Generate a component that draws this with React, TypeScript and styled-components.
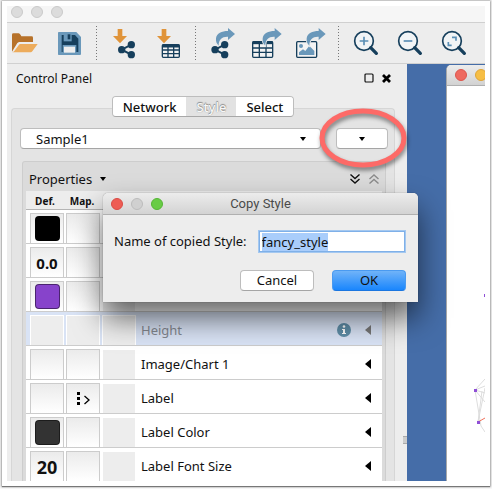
import React, { useEffect, useRef } from "react";
import styled, { createGlobalStyle } from "styled-components";

const sans = '"Noto Sans", "Open Sans", sans-serif';
const navy = "#163f5c";
const steel = "#6a98ba";
const orange = "#e0943a";

const GlobalStyle = createGlobalStyle`
  * { box-sizing: border-box; }
  body { margin: 0; background: #fff; font-family: ${sans}; font-size: 13px; color: #111; }
  button, input { font-family: inherit; margin: 0; }
`;

const Stage = styled.div`
  height: 100vh;
  padding: 1px 2px 3px;
  background: #fafafa;
`;

const Frame = styled.div`
  height: 100%;
  padding: 5px;
  background: #fff;
  box-shadow: 0 0 2px 1px rgba(0, 0, 0, 0.3), 0 1px 1px rgba(0, 0, 0, 0.4);
`;

const AppWindow = styled.main`
  position: relative;
  height: 100%;
  display: flex;
  flex-direction: column;
  overflow: hidden;
  background: #ededed;
`;

const TitleBar = styled.div`
  flex: none;
  height: 17px;
  padding-left: 4px;
  display: flex;
  align-items: flex-start;
  gap: 8px;
  background: #f6f6f6;
  border-bottom: 1px solid #d0d0d0;
`;

const Light = styled.span<{ $color: string; $edge: string }>`
  flex: none;
  width: 12px;
  height: 12px;
  border-radius: 50%;
  background: ${(p) => p.$color};
  border: 1px solid ${(p) => p.$edge};
`;

const Toolbar = styled.div`
  flex: none;
  height: 41px;
  display: flex;
  align-items: center;
  gap: 8px;
  border-bottom: 1px solid #d0d0d0;
`;

const ToolButton = styled.button`
  flex: none;
  width: 36px;
  height: 36px;
  padding: 0;
  border: 0;
  background: none;
  svg { display: block; width: 36px; height: 36px; }
`;

const Separator = styled.span`
  flex: none;
  width: 3px;
  height: 34px;
  background: repeating-linear-gradient(#777 0 1px, transparent 1px 3px) center / 1px 100% no-repeat;
`;

const Workspace = styled.div`
  flex: 1;
  min-height: 0;
  display: grid;
  grid-template-columns: minmax(0, 1fr) 78px;
`;

const ControlPanel = styled.section`
  position: relative;
  display: flex;
  flex-direction: column;
  min-height: 0;
  padding: 0 12px 0 4px;
`;

const PanelHeader = styled.header`
  flex: none;
  height: 32px;
  padding: 0 4px 4px 5px;
  display: flex;
  align-items: center;
  gap: 8px;
`;

const PanelTitle = styled.h1`
  flex: 1;
  margin: 0;
  font-size: 12px;
  font-weight: 400;
`;

const PlainButton = styled.button`
  display: flex;
  align-items: center;
  padding: 0;
  border: 0;
  background: none;
  color: inherit;
  svg { display: block; }
`;

const Grip = styled.span`
  position: absolute;
  right: 0;
  bottom: 37px;
  width: 4px;
  height: 8px;
  background: #ccc;
  border: solid #aaa;
  border-width: 1px 0;
`;

const TabStrip = styled.div`
  flex: none;
  align-self: center;
  z-index: 1;
  display: flex;
  height: 21px;
  border: 1px solid #bdbdbd;
  border-bottom-color: #a8a8a8;
  border-radius: 4px;
  overflow: hidden;
  margin-bottom: -9px;
`;

const Tab = styled.button<{ $active?: boolean }>`
  padding: 0 10px;
  border: 0;
  font-size: 13px;
  line-height: 18px;
  font-weight: 500;
  background: ${(p) => (p.$active ? "#e2e2e2" : "#fff")};
  color: ${(p) => (p.$active ? "#f8f8f8" : "#111")};
  text-shadow: ${(p) => (p.$active ? "0 -1px 1px #888, 0 0 1px #888" : "none")};
`;

const TabBody = styled.div`
  flex: 1;
  min-height: 0;
  display: flex;
  flex-direction: column;
  padding: 19px 6px 0 8px;
  background: #e4e4e4;
  border: 1px solid #d6d6d6;
  border-bottom: 0;
  border-radius: 4px 4px 0 0;
`;

const StyleRow = styled.div`
  flex: none;
  display: flex;
  gap: 15px;
  margin-bottom: 12px;
`;

const boxed = `
  height: 21px;
  border: 1px solid #bdbdbd;
  border-bottom-color: #a5a5a5;
  border-radius: 4px;
  background: #fff;
`;

const SelectWrap = styled.div`
  flex: 1;
  display: flex;
  align-items: center;
  padding-right: 14px;
  ${boxed}
`;

const StyleSelect = styled.select`
  flex: 1;
  appearance: none;
  border: 0;
  padding: 0 0 0 15px;
  background: none;
  color: #111;
  font: 13px ${sans};
  outline: none;
`;

const MenuWrap = styled.div`
  position: relative;
  flex: none;
  width: 52px;
`;

const MenuButton = styled.button`
  ${boxed}
  width: 100%;
  display: flex;
  align-items: center;
  justify-content: center;
  padding: 0;
`;

const Highlight = styled.svg`
  position: absolute;
  left: -20px;
  top: -23px;
  width: 96px;
  height: 70px;
  overflow: visible;
  pointer-events: none;
`;

const Properties = styled.section`
  flex: 1;
  min-height: 0;
  margin: 0 2px;
  padding: 0 3px;
  overflow: hidden;
  background: #dbdbdb;
  border: solid #cdcdcd;
  border-width: 1px 1px 0;
  border-radius: 3px 3px 0 0;
`;

const PropertiesHeader = styled.div`
  height: 29px;
  padding: 4px 3px 0;
  display: flex;
  align-items: center;
  gap: 9px;
`;

const MenuLabel = styled.button`
  flex: 1;
  display: flex;
  align-items: center;
  gap: 8px;
  padding: 0;
  border: 0;
  background: none;
  color: #111;
  font-size: 13px;
`;

const PropTable = styled.table`
  width: 100%;
  table-layout: fixed;
  border-collapse: separate;
  border-spacing: 0;
  background: #fff;
`;

const HeadCell = styled.th<{ $width?: number }>`
  width: ${(p) => (p.$width ? `${p.$width}px` : "auto")};
  height: 19px;
  padding: 2px 0 0;
  background: #ededed;
  border-bottom: 1px solid #b5b5b5;
  font-size: 10px;
  line-height: 14px;
  font-weight: 700;
  text-align: center;
`;

const Row = styled.tr<{ $selected?: boolean }>`
  background: ${(p) => (p.$selected ? "#d9e3f5" : "#fff")};
  color: ${(p) => (p.$selected ? "#83878f" : "#111")};
  --cell-edge: ${(p) => (p.$selected ? "#fff" : "#ccc")};
  --cell-fill: ${(p) => (p.$selected ? "#ededed" : "linear-gradient(#ebebeb, #fff)")};
`;

const Cell = styled.td`
  height: 34px;
  padding: 3px 0 0 2px;
  border-bottom: 1px solid #ccc;
  vertical-align: top;
  &:first-child { padding-left: 4px; }
`;

const Well = styled.div<{ $flat?: boolean; $size?: number }>`
  display: flex;
  align-items: center;
  justify-content: center;
  height: 30px;
  width: 34px;
  font-size: ${(p) => p.$size ?? 15}px;
  font-weight: 700;
  color: #111;
  background: ${(p) => (p.$flat ? "#ededed" : "var(--cell-fill)")};
  border: solid ${(p) => (p.$flat ? "#fff" : "var(--cell-edge)")};
  border-width: 1px 1px 0;
`;

const Swatch = styled.span<{ $color: string }>`
  width: 25px;
  height: 25px;
  border-radius: 4px;
  border: 1px solid rgba(0, 0, 0, 0.45);
  background: ${(p) => p.$color};
`;

const NameCell = styled.div`
  height: 30px;
  padding: 0 11px 0 3px;
  display: flex;
  align-items: center;
  gap: 14px;
  font-size: 13px;
  span { flex: 1; }
`;

const Desktop = styled.div`
  padding: 1px 0 0 39px;
  display: flex;
  background: #456da8;
`;

const NetworkWindow = styled.div`
  flex: 1;
  display: flex;
  flex-direction: column;
  border-left: 1px solid #a8a8a8;
  border-radius: 5px 0 0 0;
  background: #fff;
  overflow: hidden;
`;

const NetworkTitle = styled.div`
  flex: none;
  height: 21px;
  padding-left: 8px;
  display: flex;
  align-items: center;
  gap: 8px;
  background: linear-gradient(#ececec, #d2d2d2);
  border-bottom: 1px solid #b0b0b0;
`;

const NetworkCanvas = styled.svg`
  flex: none;
  align-self: flex-end;
  width: 38px;
  height: 395px;
`;

const Dialog = styled.form`
  position: absolute;
  left: 96px;
  top: 187px;
  width: 315px;
  background: #ededed;
  border-radius: 5px 5px 0 0;
  box-shadow: 0 0 1px rgba(0, 0, 0, 0.6), 0 16px 30px rgba(0, 0, 0, 0.6);
`;

const DialogTitle = styled.div`
  height: 22px;
  padding: 0 8px;
  display: grid;
  grid-template-columns: 52px 1fr 52px;
  align-items: center;
  border-radius: 5px 5px 0 0;
  background: linear-gradient(#ececec, #d3d3d3);
  border-bottom: 1px solid #b0b0b0;
`;

const Lights = styled.div`
  display: flex;
  gap: 8px;
`;

const DialogName = styled.h2`
  margin: 0;
  text-align: center;
  font: 400 13px/20px Roboto, Inter, sans-serif;
  color: #4a4a4a;
`;

const Field = styled.label`
  display: flex;
  align-items: center;
  gap: 12px;
  padding: 16px 13px 0 11px;
  font-size: 13px;
  line-height: 21px;
  white-space: nowrap;
`;

const NameInput = styled.input`
  flex: 1;
  min-width: 0;
  height: 21px;
  padding: 0 2px;
  border: 1px solid #7fb0e8;
  outline: 1px solid #a4c8f0;
  outline-offset: 0;
  background: #fff;
  color: #111;
  font-size: 13px;
  line-height: 17px;
  &::selection { background: #a9cdfb; color: #111; }
`;

const Actions = styled.div`
  display: flex;
  justify-content: flex-end;
  gap: 18px;
  padding: 18px 12px 11px;
`;

const ActionButton = styled.button<{ $primary?: boolean }>`
  width: 74px;
  height: 21px;
  padding: 0;
  border: 1px solid ${(p) => (p.$primary ? "#4a9af0" : "#bdbdbd")};
  border-bottom-color: ${(p) => (p.$primary ? "#1a76e0" : "#a5a5a5")};
  border-radius: 4px;
  background: ${(p) => (p.$primary ? "linear-gradient(#70b3f8, #1a86fd)" : "#fff")};
  color: #111;
  font-size: 13px;
  line-height: 17px;
`;

const DownArrow = () => (
  <svg width="6" height="4" viewBox="0 0 6 4" aria-hidden="true">
    <path d="M0 0H6L3 4Z" fill="#000" />
  </svg>
);

const LeftArrow = ({ color }: { color: string }) => (
  <svg width="6" height="10" viewBox="0 0 6 10" aria-hidden="true">
    <path d="M6 0V10L0 5Z" fill={color} />
  </svg>
);

const Chevrons = ({ up }: { up?: boolean }) => (
  <svg width="10" height="10" viewBox="0 0 10 10" fill="none" stroke={up ? "#8c8c8c" : "#111"} strokeWidth="1.4" aria-hidden="true">
    <path d={up ? "M.5 5 5 1 9.500 5M.5 9.500 5 5.500 9.500 9.500" : "M.5 .5 5 4.500 9.500 .5M.5 5 5 9 9.500 5"} />
  </svg>
);

const ShareGlyph = ({ x, y }: { x: number; y: number }) => (
  <g transform={`translate(${x} ${y})`} fill={navy}>
    <path d="M29-15 0 0 29 15" fill="none" stroke={navy} strokeWidth="6" />
    <circle r="11" />
    <circle cx="29" cy="-15" r="11" />
    <circle cx="29" cy="15" r="11" />
  </g>
);

const ImportArrow = () => <path d="M35 12H49V33H63L42 55 21 33H35Z" fill={orange} />;

const ExportArrow = ({ x }: { x: number }) => (
  <path
    transform={`translate(${x} 0)`}
    d="M41 62C35 56 32 50 33 40 35 24 50 18 69 18V9L90 27 69 45V35C52 34 41 42 41 62Z"
    fill={steel}
    stroke="#ededed"
    strokeWidth="5"
    paintOrder="stroke"
  />
);

const FloppyIcon = () => (
  <>
    <path d="M23 21H76L90 36V87Q90 90 87 90H23Q21 90 21 87V24Q21 21 23 21Z" fill={steel} />
    <path d="M32 30H72L82 41V81H32Z" fill={navy} />
    <path d="M38 26H62V49H38Z" fill={steel} />
    <path d="M50 28H58V43H50Z" fill={navy} />
    <path d="M35 60H76V84H35Z" fill={steel} />
    <path d="M39 65H72V83H39Z" fill="#eee" />
  </>
);

const Lens = ({ children }: { children: React.ReactNode }) => (
  <>
    <circle cx="48" cy="48" r="28" fill="#f1f4f6" stroke={navy} strokeWidth="5" />
    <path d="M68 68 85 85" stroke={navy} strokeWidth="10" strokeLinecap="round" />
    <g fill="none" stroke="#5b8fb5" strokeWidth="5">{children}</g>
  </>
);

const tools: Array<{ name: string; art: React.ReactNode } | null> = [
  {
    name: "Open session",
    art: (
      <>
        <path d="M15 80V29Q15 25 19 25H35Q38 25 41 30L43 34H74Q78 34 78 38V51H36L31 54Z" fill="#b7722a" />
        <path d="M16 82Q20 81 22 78L36 59Q37 57 40 57H92L76 79Q74 82 71 82Z" fill="#edac5c" />
      </>
    ),
  },
  { name: "Save session", art: <FloppyIcon /> },
  null,
  { name: "Import network", art: <><ImportArrow /><ShareGlyph x={47} y={74} /></> },
  {
    name: "Import table",
    art: (
      <>
        <ImportArrow />
        <rect x="37" y="59" width="51" height="38" rx="3" fill="#f3f3f3" stroke={navy} strokeWidth="4" />
        <path d="M37 63H88" stroke={navy} strokeWidth="9" />
        <path d="M37 75H88M37 86H88M54 60V97M71 60V97" stroke={navy} strokeWidth="4" />
      </>
    ),
  },
  null,
  { name: "Export network", art: <><ExportArrow x={0} /><ShareGlyph x={30} y={74} /></> },
  {
    name: "Export table",
    art: (
      <>
        <rect x="11" y="50" width="60" height="47" rx="3" fill="#f3f3f3" stroke={navy} strokeWidth="4" />
        <path d="M11 53H71" stroke={navy} strokeWidth="9" />
        <path d="M11 69H71M11 82H71M31 52V97M51 52V97" stroke={navy} strokeWidth="4" />
        <ExportArrow x={8} />
      </>
    ),
  },
  {
    name: "Export image",
    art: (
      <>
        <rect x="11" y="50" width="60" height="47" rx="3" fill="#f3f3f3" stroke={navy} strokeWidth="4" />
        <circle cx="24" cy="63" r="6" fill={steel} />
        <path d="M18 90V82L30 73 37 78 49 62 64 78V90Z" fill={steel} />
        <ExportArrow x={8} />
      </>
    ),
  },
  null,
  { name: "Zoom in", art: <Lens><path d="M35 48H61M48 35V61" /></Lens> },
  { name: "Zoom out", art: <Lens><path d="M35 48H61" /></Lens> },
  { name: "Fit content", art: <Lens><path d="M48 37H60V47M37 51V61H47" /></Lens> },
];

const MappingIcon = () => (
  <svg width="13" height="13" viewBox="0 0 13 13" aria-label="Mapping">
    <path d="M0 0h3v3H0zM0 5h3v3H0zM0 10h3v3H0z" fill="#000" />
    <path d="M7.500 4 12 8 7.500 12" fill="none" stroke="#000" strokeWidth="1.300" />
  </svg>
);

const InfoIcon = () => (
  <svg width="14" height="14" viewBox="0 0 14 14" aria-label="Info">
    <circle cx="7" cy="7" r="7" fill="#5f8ea8" />
    <circle cx="7" cy="3.500" r="1.300" fill="#fff" />
    <path d="M5 6H8V10H9V11H5V10H6V7H5Z" fill="#fff" />
  </svg>
);

type Property = { name: string; def?: React.ReactNode; size?: number; mapped?: boolean; selected?: boolean };

const rows: Property[] = [
  { name: "", def: <Swatch $color="#000" /> },
  { name: "", def: "0.0" },
  { name: "", def: <Swatch $color="#8743cb" /> },
  { name: "Height", selected: true },
  { name: "Image/Chart 1" },
  { name: "Label", mapped: true },
  { name: "Label Color", def: <Swatch $color="#333" /> },
  { name: "Label Font Size", def: "20", size: 18 },
];

export default function App() {
  const nameRef = useRef<HTMLInputElement>(null);

  useEffect(() => {
    nameRef.current?.focus();
    nameRef.current?.select();
  }, []);

  return (
    <Stage>
      <GlobalStyle />
      <Frame>
        <AppWindow>
          <TitleBar>
            <Light $color="#dcdcdc" $edge="#cacaca" />
            <Light $color="#dcdcdc" $edge="#cacaca" />
            <Light $color="#dcdcdc" $edge="#cacaca" />
          </TitleBar>
          <Toolbar>
            {tools.map((tool, i) =>
              tool ? (
                <ToolButton key={i} type="button" aria-label={tool.name}>
                  <svg viewBox="0 0 108 108">{tool.art}</svg>
                </ToolButton>
              ) : (
                <Separator key={i} />
              )
            )}
          </Toolbar>
          <Workspace>
            <ControlPanel>
              <PanelHeader>
                <PanelTitle>Control Panel</PanelTitle>
                <PlainButton type="button" aria-label="Float panel">
                  <svg width="10" height="10" viewBox="0 0 10 10">
                    <rect x="1" y="1" width="8" height="8" rx="1" fill="none" stroke="#111" strokeWidth="1.200" />
                  </svg>
                </PlainButton>
                <PlainButton type="button" aria-label="Close panel">
                  <svg width="9" height="9" viewBox="0 0 9 9">
                    <path d="M1 1 8 8M8 1 1 8" stroke="#000" strokeWidth="2.800" />
                  </svg>
                </PlainButton>
              </PanelHeader>
              <TabStrip role="tablist">
                <Tab type="button" role="tab">Network</Tab>
                <Tab type="button" role="tab" $active aria-selected>Style</Tab>
                <Tab type="button" role="tab">Select</Tab>
              </TabStrip>
              <TabBody>
                <StyleRow>
                  <SelectWrap>
                    <StyleSelect aria-label="Current style" defaultValue="Sample1">
                      <option>Sample1</option>
                    </StyleSelect>
                    <DownArrow />
                  </SelectWrap>
                  <MenuWrap>
                    <MenuButton type="button" aria-label="Style options">
                      <DownArrow />
                    </MenuButton>
                    <Highlight viewBox="0 0 96 70" aria-hidden="true">
                      <ellipse cx="48" cy="36" rx="41" ry="27" fill="none" stroke="#000" strokeOpacity=".45" strokeWidth="5" filter="blur(2px)" />
                      <ellipse cx="47" cy="33" rx="41" ry="27" fill="none" stroke="#fd6a67" strokeWidth="5" />
                    </Highlight>
                  </MenuWrap>
                </StyleRow>
                <Properties>
                  <PropertiesHeader>
                    <MenuLabel type="button">Properties <DownArrow /></MenuLabel>
                    <PlainButton type="button" aria-label="Expand all"><Chevrons /></PlainButton>
                    <PlainButton type="button" aria-label="Collapse all"><Chevrons up /></PlainButton>
                  </PropertiesHeader>
                  <PropTable>
                    <thead>
                      <tr>
                        <HeadCell $width={38}>Def.</HeadCell>
                        <HeadCell $width={36}>Map.</HeadCell>
                        <HeadCell $width={36} />
                        <HeadCell />
                      </tr>
                    </thead>
                    <tbody>
                      {rows.map((row, i) => (
                        <Row key={i} $selected={row.selected}>
                          <Cell><Well $size={row.size}>{row.def}</Well></Cell>
                          <Cell><Well>{row.mapped && <MappingIcon />}</Well></Cell>
                          <Cell><Well $flat /></Cell>
                          <Cell>
                            <NameCell>
                              <span>{row.name}</span>
                              {row.selected && <InfoIcon />}
                              <LeftArrow color={row.selected ? "#777" : "#000"} />
                            </NameCell>
                          </Cell>
                        </Row>
                      ))}
                    </tbody>
                  </PropTable>
                </Properties>
              </TabBody>
              <Grip />
            </ControlPanel>
            <Desktop>
              <NetworkWindow>
                <NetworkTitle>
                  <Light $color="#ee6a60" $edge="#dc554c" />
                  <Light $color="#f6be45" $edge="#dfa435" />
                </NetworkTitle>
                <NetworkCanvas viewBox="0 0 38 395" aria-label="Network view">
                  <g stroke="#ddd" strokeWidth="1" fill="none">
                    <path d="M28 304 38 293M28 304 38 300M28 304 38 307M28 304 38 316M28 304 34 340 38 346M31 336 38 302M31 336 35 305" />
                  </g>
                  <path d="M31 336 38 332" stroke="#f0705a" />
                  <g fill="#8f4fd6">
                    <rect x="27" y="303" width="3" height="3" />
                    <rect x="30" y="335" width="3" height="3" />
                    <rect x="37" y="208" width="1" height="3" />
                  </g>
                </NetworkCanvas>
              </NetworkWindow>
            </Desktop>
          </Workspace>
          <Dialog role="dialog" aria-label="Copy Style" onSubmit={(e) => e.preventDefault()}>
            <DialogTitle>
              <Lights>
                <Light $color="#ee5c54" $edge="#d94c45" />
                <Light $color="#d0d0d0" $edge="#bcbcbc" />
                <Light $color="#68cc45" $edge="#55b535" />
              </Lights>
              <DialogName>Copy Style</DialogName>
            </DialogTitle>
            <Field>
              Name of copied Style:
              <NameInput ref={nameRef} type="text" defaultValue="fancy_style" />
            </Field>
            <Actions>
              <ActionButton type="button">Cancel</ActionButton>
              <ActionButton type="submit" $primary>OK</ActionButton>
            </Actions>
          </Dialog>
        </AppWindow>
      </Frame>
    </Stage>
  );
}
